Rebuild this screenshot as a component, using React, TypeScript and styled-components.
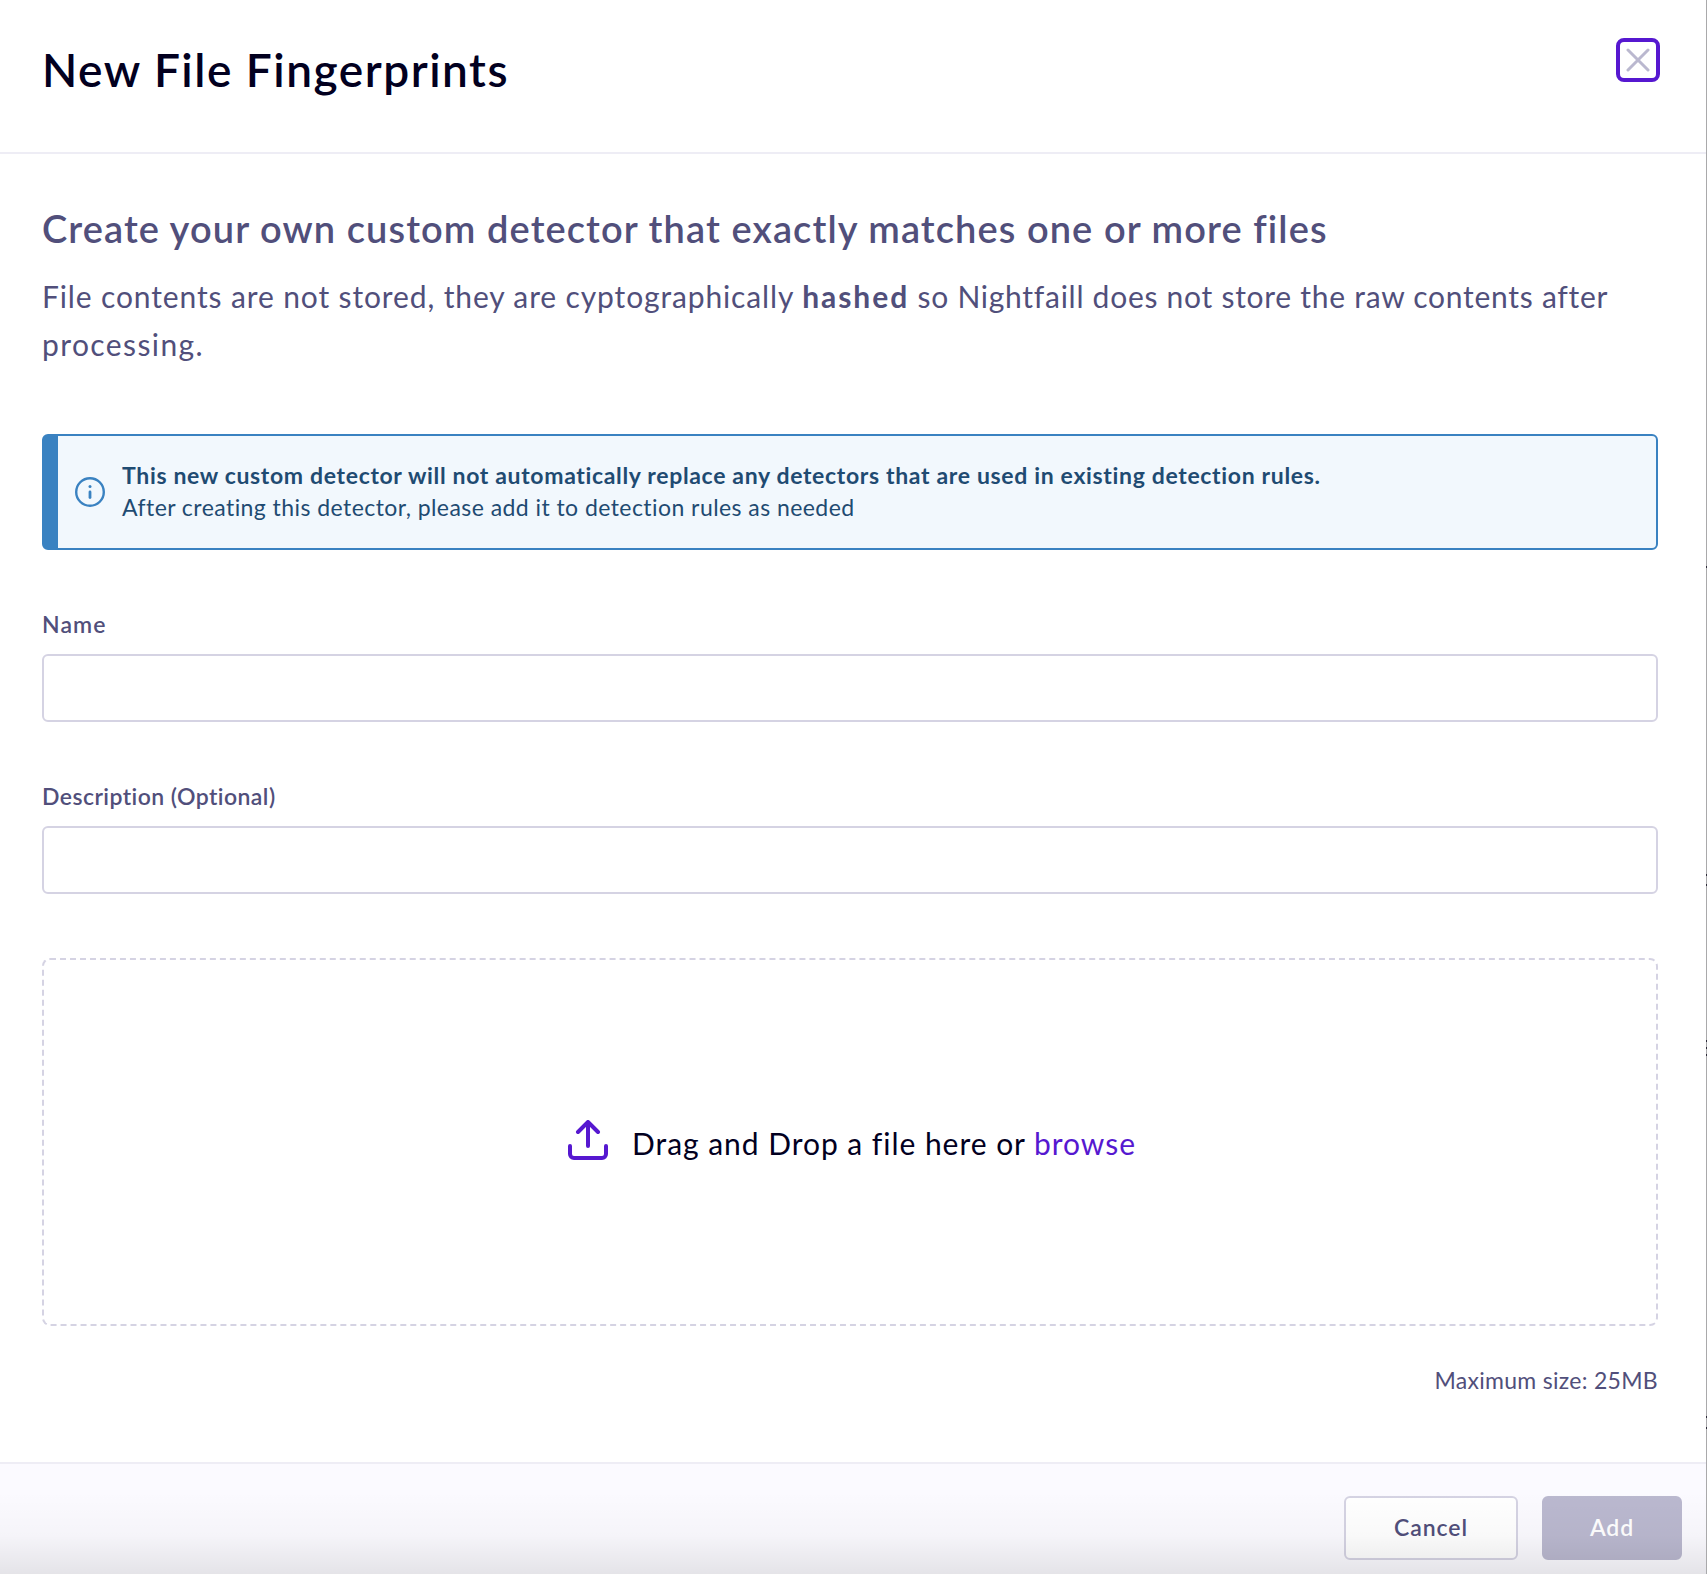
import React from "react";
import styled, { createGlobalStyle } from "styled-components";

const color = {
  ink: "#02001f",
  text: "#514f7b",
  line: "#d5d3e3",
  divider: "#eeedf5",
  accent: "#5618d0",
  muted: "#bab8cf",
  info: "#3a82c1",
  infoText: "#1f4b72",
};

const GlobalStyle = createGlobalStyle`
  * { box-sizing: border-box; }
  body { margin: 0; background: #fff; }
  body, input, button { font-family: Lato, "Open Sans", sans-serif; }
`;

const Screen = styled.div`
  display: flex;
  width: 1707px;
  height: 1574px;
  overflow: hidden;
`;

const Dialog = styled.section`
  flex: 1;
  display: flex;
  flex-direction: column;
  background: #fff;
`;

const marks = [566, 874, 884, 1040, 1047, 1054, 1416, 1427];

const PageEdge = styled.div`
  width: 1px;
  background: ${marks
    .map((y) => `linear-gradient(#2d2b3a, #2d2b3a) 0 ${y}px / 1px 2px no-repeat`)
    .join(", ")}, #a9a9ab;
`;

const Header = styled.header`
  display: flex;
  justify-content: space-between;
  align-items: flex-start;
  height: 154px;
  padding: 38px 46px 0 42px;
  border-bottom: 2px solid ${color.divider};
`;

const Title = styled.h1`
  margin: 0;
  padding-top: 2px;
  font-size: 46px;
  line-height: 60px;
  font-weight: 600;
  letter-spacing: 1.52px;
  color: ${color.ink};
`;

const CloseButton = styled.button`
  display: grid;
  place-items: center;
  width: 44px;
  height: 44px;
  padding: 0;
  border: 4px solid ${color.accent};
  border-radius: 8px;
  background: #fff;
`;

const Body = styled.main`
  flex: 1;
  display: flex;
  flex-direction: column;
  padding: 50px 48px 0 42px;
  color: ${color.text};
`;

const Heading = styled.h2`
  margin: 0;
  font-size: 38px;
  line-height: 48px;
  font-weight: 600;
  letter-spacing: 1.09px;
`;

const Intro = styled.p`
  margin: 20px 0 0;
  font-size: 30px;
  line-height: 48px;
  letter-spacing: 0.87px;
  white-space: nowrap;
`;

const Run = styled.span<{ $tracking: number; $bold?: boolean }>`
  font-weight: ${(p) => (p.$bold ? 700 : 400)};
  letter-spacing: ${(p) => p.$tracking}px;
`;

const Banner = styled.aside`
  display: flex;
  align-items: center;
  gap: 17px;
  height: 116px;
  margin-top: 66px;
  padding-left: 17px;
  border: 2px solid ${color.info};
  border-left-width: 16px;
  border-radius: 6px;
  background: #f2f8fd;
  color: ${color.infoText};
`;

const BannerText = styled.div`
  display: flex;
  flex-direction: column;
  padding-bottom: 2px;
  white-space: nowrap;
`;

const BannerLine = styled.span<{ $strong?: boolean }>`
  font-size: 23px;
  line-height: 32px;
  font-weight: ${(p) => (p.$strong ? 700 : 400)};
  letter-spacing: ${(p) => (p.$strong ? 0.66 : 0.44)}px;
`;

const Field = styled.label`
  display: flex;
  flex-direction: column;
  gap: 14px;
  margin-top: 58px;
`;

const FieldLabel = styled.span<{ $tracking: number }>`
  font-size: 23px;
  line-height: 32px;
  font-weight: 600;
  letter-spacing: ${(p) => p.$tracking}px;
`;

const Input = styled.input`
  width: 100%;
  height: 68px;
  padding: 0 20px;
  border: 2px solid ${color.line};
  border-radius: 6px;
  background: #fff;
  font-size: 24px;
  outline: none;
`;

const DropZone = styled.div`
  display: flex;
  justify-content: center;
  align-items: center;
  gap: 24px;
  height: 368px;
  margin-top: 64px;
  padding-left: 4px;
  border: 2px dashed ${color.line};
  border-radius: 8px;
  color: ${color.ink};
`;

const DropText = styled.span`
  padding-top: 2px;
  font-size: 30px;
  line-height: 40px;
  letter-spacing: 0.96px;
  white-space: nowrap;
`;

const Browse = styled.a`
  color: ${color.accent};
`;

const SizeNote = styled.p`
  margin: 38px 0 0;
  text-align: right;
  font-size: 23px;
  line-height: 32px;
  letter-spacing: 0.29px;
`;

const Footer = styled.footer`
  display: flex;
  justify-content: flex-end;
  gap: 24px;
  height: 112px;
  padding: 32px 24px 0;
  border-top: 2px solid ${color.divider};
  background: #fbfaff;
  position: relative;
  &::after {
    content: "";
    position: absolute;
    inset: 0;
    background: linear-gradient(transparent 25%, rgba(0, 0, 0, 0.025) 65%, rgba(0, 0, 0, 0.09));
    pointer-events: none;
  }
`;

const Button = styled.button<{ $filled?: boolean }>`
  width: ${(p) => (p.$filled ? 140 : 174)}px;
  height: 64px;
  padding: 0 0 2px;
  border: 2px solid ${(p) => (p.$filled ? color.muted : color.line)};
  border-radius: 6px;
  background: ${(p) => (p.$filled ? color.muted : "#fff")};
  color: ${(p) => (p.$filled ? "#fff" : color.text)};
  font-size: 23px;
  font-weight: 600;
  letter-spacing: 0.9px;
`;

const UploadGlyph = styled.svg`
  margin-bottom: 4px;
`;

const CloseIcon = () => (
  <svg width="24" height="24" viewBox="0 0 24 24" fill="none" stroke={color.muted} strokeWidth="3" strokeLinecap="round">
    <path d="M2 2 22 22M22 2 2 22" />
  </svg>
);

const InfoIcon = () => (
  <svg width="30" height="30" viewBox="0 0 30 30" fill="none" stroke={color.info} strokeLinecap="round">
    <circle cx="15" cy="15" r="13.8" strokeWidth="2.4" />
    <path d="M15 15v5.5" strokeWidth="2.8" />
    <circle cx="15" cy="9.6" r="1.5" fill={color.info} stroke="none" />
  </svg>
);

const UploadIcon = () => (
  <UploadGlyph width="40" height="40" viewBox="0 0 40 40" fill="none" stroke={color.accent} strokeWidth="4" strokeLinecap="round" strokeLinejoin="round">
    <path d="M20 26V2M10 12 20 2 30 12" />
    <path d="M2 26v8a4 4 0 0 0 4 4h28a4 4 0 0 0 4-4v-8" />
  </UploadGlyph>
);

export default function App() {
  return (
    <Screen>
      <GlobalStyle />
      <Dialog>
        <Header>
          <Title>New File Fingerprints</Title>
          <CloseButton aria-label="Close">
            <CloseIcon />
          </CloseButton>
        </Header>
        <Body>
          <Heading>Create your own custom detector that exactly matches one or more files</Heading>
          <Intro>
            File contents are not stored, they are cyptographically{" "}
            <Run as="b" $bold $tracking={1.95}>hashed</Run>
            <Run $tracking={0.73}> so Nightfaill does not store the raw contents after</Run>
            <br />
            <Run $tracking={1.4}>processing.</Run>
          </Intro>
          <Banner>
            <InfoIcon />
            <BannerText>
              <BannerLine $strong>
                This new custom detector will not automatically replace any detectors that are used in existing detection rules.
              </BannerLine>
              <BannerLine>After creating this detector, please add it to detection rules as needed</BannerLine>
            </BannerText>
          </Banner>
          <Field>
            <FieldLabel $tracking={1.1}>Name</FieldLabel>
            <Input />
          </Field>
          <Field>
            <FieldLabel $tracking={0.44}>Description (Optional)</FieldLabel>
            <Input />
          </Field>
          <DropZone>
            <UploadIcon />
            <DropText>
              Drag and Drop a file here or <Browse>browse</Browse>
            </DropText>
          </DropZone>
          <SizeNote>Maximum size: 25MB</SizeNote>
        </Body>
        <Footer>
          <Button>Cancel</Button>
          <Button $filled>Add</Button>
        </Footer>
      </Dialog>
      <PageEdge />
    </Screen>
  );
}
